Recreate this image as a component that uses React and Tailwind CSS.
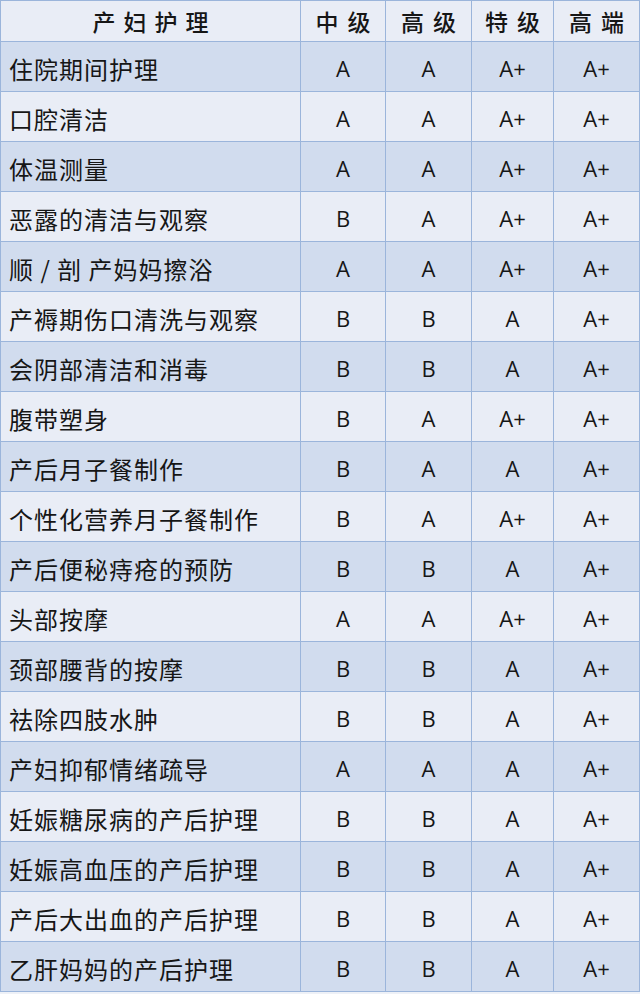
const rows = [
  ['住院期间护理', 'A', 'A', 'A+', 'A+'],
  ['口腔清洁', 'A', 'A', 'A+', 'A+'],
  ['体温测量', 'A', 'A', 'A+', 'A+'],
  ['恶露的清洁与观察', 'B', 'A', 'A+', 'A+'],
  ['顺 / 剖 产妈妈擦浴', 'A', 'A', 'A+', 'A+'],
  ['产褥期伤口清洗与观察', 'B', 'B', 'A', 'A+'],
  ['会阴部清洁和消毒', 'B', 'B', 'A', 'A+'],
  ['腹带塑身', 'B', 'A', 'A+', 'A+'],
  ['产后月子餐制作', 'B', 'A', 'A', 'A+'],
  ['个性化营养月子餐制作', 'B', 'A', 'A+', 'A+'],
  ['产后便秘痔疮的预防', 'B', 'B', 'A', 'A+'],
  ['头部按摩', 'A', 'A', 'A+', 'A+'],
  ['颈部腰背的按摩', 'B', 'B', 'A', 'A+'],
  ['祛除四肢水肿', 'B', 'B', 'A', 'A+'],
  ['产妇抑郁情绪疏导', 'A', 'A', 'A', 'A+'],
  ['妊娠糖尿病的产后护理', 'B', 'B', 'A', 'A+'],
  ['妊娠高血压的产后护理', 'B', 'B', 'A', 'A+'],
  ['产后大出血的产后护理', 'B', 'B', 'A', 'A+'],
  ['乙肝妈妈的产后护理', 'B', 'B', 'A', 'A+'],
]

const headers = ['中级', '高级', '特级', '高端']

export default function App() {
  return (
    <div className="w-[640px] h-[994px] bg-[#eef1f7] text-[#161616]">
      <div className="grid grid-cols-[301px_85px_86px_82px_86px] border-t border-[#9bb5db]">
        <div className="h-[41px] flex items-center justify-center bg-[#e9edf6] border-l border-r border-b border-[#9bb5db] font-['Noto_Sans_CJK_SC',sans-serif] font-medium text-[23px] tracking-[8px] pl-[8px]">
          产妇护理
        </div>
        {headers.map((h) => (
          <div
            key={h}
            className="h-[41px] flex items-center justify-center bg-[#e9edf6] border-r border-b border-[#9bb5db] font-['Noto_Sans_CJK_SC',sans-serif] font-medium text-[23px] tracking-[9px] pl-[9px]"
          >
            {h}
          </div>
        ))}

        {rows.map((r, i) => {
          const bg = i % 2 === 0 ? 'bg-[#d1dcee]' : 'bg-[#e9edf6]'
          return <Row key={r[0]} cells={r} bg={bg} />
        })}
      </div>
    </div>
  )
}

function Row({ cells, bg }) {
  const [name, ...grades] = cells
  return (
    <>
      <div className={`${bg} h-[50px] flex items-center pt-[4px] pl-[8px] border-l border-r border-b border-[#9bb5db] font-['Noto_Sans_CJK_SC',sans-serif] text-[24px] tracking-[1px] whitespace-nowrap`}>
        {name}
      </div>
      {grades.map((g, j) => (
        <div
          key={j}
          className={`${bg} h-[50px] flex items-center justify-center pt-[4px] border-r border-b border-[#9bb5db] font-['Open_Sans',sans-serif] text-[22px]`}
        >
          {g}
        </div>
      ))}
    </>
  )
}
